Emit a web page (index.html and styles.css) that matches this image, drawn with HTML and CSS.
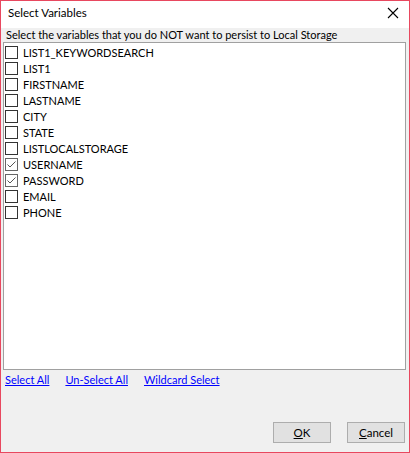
FILE: index.html
```html
<!DOCTYPE html>
<html>
<head>
<meta charset="utf-8">
<link rel="stylesheet" href="styles.css">
</head>
<body>
<div class="window">
  <div class="titlebar">
    <span class="title">Select Variables</span>
    <span class="close"><svg width="12" height="12" viewBox="0 0 12 12"><path d="M1 1L11 11M11 1L1 11" stroke="#000" stroke-width="1.1" fill="none"/></svg></span>
  </div>
  <div class="content">
    <div class="prompt">Select the variables that you do NOT want to persist to Local Storage</div>
    <div class="listbox">
      <div class="item"><span class="cb"></span>LIST1_KEYWORDSEARCH</div>
      <div class="item"><span class="cb"></span>LIST1</div>
      <div class="item"><span class="cb"></span>FIRSTNAME</div>
      <div class="item"><span class="cb"></span>LASTNAME</div>
      <div class="item"><span class="cb"></span>CITY</div>
      <div class="item"><span class="cb"></span>STATE</div>
      <div class="item"><span class="cb"></span>LISTLOCALSTORAGE</div>
      <div class="item"><span class="cb checked"><svg width="11" height="11" viewBox="0 0 11 11"><path d="M1.5 5.5L4 8L9.5 2.5" stroke="#555" stroke-width="1" fill="none"/></svg></span>USERNAME</div>
      <div class="item"><span class="cb checked"><svg width="11" height="11" viewBox="0 0 11 11"><path d="M1.5 5.5L4 8L9.5 2.5" stroke="#555" stroke-width="1" fill="none"/></svg></span>PASSWORD</div>
      <div class="item"><span class="cb"></span>EMAIL</div>
      <div class="item"><span class="cb"></span>PHONE</div>
    </div>
    <div class="links">
      <a href="#" class="link">Select All</a>
      <a href="#" class="link">Un-Select All</a>
      <a href="#" class="link">Wildcard Select</a>
    </div>
    <div class="buttons">
      <button class="btn"><u>O</u>K</button>
      <button class="btn"><u>C</u>ancel</button>
    </div>
  </div>
</div>
</body>
</html>
```
FILE: styles.css
```css
html, body {
  margin: 0;
  padding: 0;
}
body {
  font-family: Lato, "Liberation Sans", sans-serif;
  font-size: 11px;
  color: #000;
}
.window {
  width: 410px;
  height: 453px;
  box-sizing: border-box;
  border: 1px solid #e8485f;
  background: #f0f0f0;
  display: flex;
  flex-direction: column;
}
.titlebar {
  height: 27px;
  background: #fff;
  display: flex;
  align-items: flex-start;
  justify-content: space-between;
  padding: 4px 10px 0 7px;
  box-sizing: border-box;
  flex: none;
}
.title {
  font-size: 11.5px;
  line-height: 15px;
}
.close {
  display: flex;
  align-items: center;
  padding-top: 2px;
}
.content {
  flex: 1;
  display: flex;
  flex-direction: column;
  padding: 0 3px 0 2px;
}
.prompt {
  height: 14px;
  line-height: 14px;
  padding-left: 3px;
  white-space: nowrap;
}
.listbox {
  height: 328px;
  box-sizing: border-box;
  border: 1px solid #a0a0a0;
  background: #fff;
  padding: 1px 0 0 1px;
}
.item {
  height: 16px;
  display: flex;
  align-items: center;
  white-space: nowrap;
}
.cb {
  width: 13px;
  height: 13px;
  box-sizing: border-box;
  border: 1px solid #333;
  background: #fff;
  margin-right: 5px;
  display: flex;
  align-items: center;
  justify-content: center;
}
.cb.checked {
  border-color: #666;
}
.links {
  display: flex;
  gap: 16px;
  margin-top: 2px;
  padding-left: 2px;
  height: 16px;
  line-height: 16px;
}
.link {
  color: #0000ff;
  text-decoration: underline;
}
.buttons {
  display: flex;
  justify-content: flex-end;
  gap: 16px;
  margin-top: auto;
  margin-bottom: 9px;
  padding-right: 1px;
}
.btn {
  width: 58px;
  height: 21px;
  background: #e1e1e1;
  border: 1px solid #adadad;
  font-family: inherit;
  font-size: 11.5px;
  padding: 0;
  color: #000;
}
```
